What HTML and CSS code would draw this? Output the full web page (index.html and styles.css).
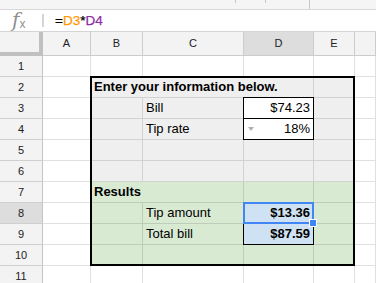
FILE: index.html
```html
<!DOCTYPE html>
<html lang="en-US">
<head>
    <meta charset="UTF-8">
    <title>Tip calculator</title>
<link rel="stylesheet" href="styles.css">
</head>

<body>
<div class=toolbar>
  <span class=tick></span><span class="tick t2"></span><span class="tick t3"></span>
</div>
<div class=fbar>
  <span class=fx><i>f</i><sub>x</sub></span>
  <span class=sep></span>
  <span class=formula>=<span class=ref1>D3</span>*<span class=ref2>D4</span></span>
</div>

<div class=sheet>
 <div class="grid cells">
  <!-- column headers -->
  <div class="hd corner"></div><div class=hd>A</div><div class=hd>B</div><div class=hd>C</div><div class="hd cur">D</div><div class=hd>E</div><div class=hd></div>
  <!-- 1 -->
  <div class=rh>1</div><div></div><div></div><div></div><div></div><div></div><div></div>
  <!-- 2 -->
  <div class=rh>2</div><div></div><div class="gray b span3">Enter your information below.</div><div class=gray></div><div></div>
  <!-- 3 -->
  <div class=rh>3</div><div></div><div class=gray></div><div class=gray>Bill</div><div class=r>$74.23</div><div class=gray></div><div></div>
  <!-- 4 -->
  <div class=rh>4</div><div></div><div class=gray></div><div class=gray>Tip rate</div><div class=drop><span class=dd></span>18%</div><div class=gray></div><div></div>
  <!-- 5 -->
  <div class=rh>5</div><div></div><div class=gray></div><div class=gray></div><div class=gray></div><div class=gray></div><div></div>
  <!-- 6 -->
  <div class=rh>6</div><div></div><div class=gray></div><div class=gray></div><div class=gray></div><div class=gray></div><div></div>
  <!-- 7 -->
  <div class=rh>7</div><div></div><div class="green b span2">Results</div><div class=green></div><div class=green></div><div></div>
  <!-- 8 -->
  <div class="rh cur">8</div><div></div><div class=green></div><div class=green>Tip amount</div><div class="blue b r">$13.36</div><div class=green></div><div></div>
  <!-- 9 -->
  <div class=rh>9</div><div></div><div class=green></div><div class=green>Total bill</div><div class="blue b r">$87.59</div><div class=green></div><div></div>
  <!-- 10 -->
  <div class=rh>10</div><div></div><div class=green></div><div class=green></div><div class=green></div><div class=green></div><div></div>
  <!-- 11 -->
  <div class=rh>11</div><div></div><div></div><div></div><div></div><div></div><div></div>
 </div>

 <!-- borders drawn over the cells -->
 <div class="grid marks">
  <div class="box frame"></div>
  <div class="box d3"></div>
  <div class="box d4"></div>
  <div class="box d9"></div>
  <div class="box sel"><span class=handle></span></div>
 </div>
</div>
</body>
</html>
```

FILE: styles.css
```css
body {
  margin: 0;
  width: 376px;
  height: 283px;
  overflow: hidden;
  background: white;
  font: 13px "Liberation Sans", Arial, sans-serif;
  color: #000;
}

/* remains of the toolbar */
.toolbar {
  display: flex;
  align-items: flex-start;
  height: 9px;
  padding-left: 235px;
  background: #f5f5f5;
  border-bottom: 1px solid #d9d9d9;
}
.tick {
  width: 1px;
  height: 3px;
  background: #c8c8c8;
}
.t2 { margin-left: 29px; }
.t3 { margin-left: 43px; height: 9px; }

/* formula bar */
.fbar {
  display: flex;
  align-items: center;
  height: 21px;
  border-bottom: 1px solid #d4d4d4;
}
.fx {
  width: 30px;
  padding-left: 12px;
  box-sizing: content-box;
  color: #8f8f8f;
  font: italic 20px "DejaVu Serif", serif;
  line-height: 20px;
  letter-spacing: -1px;
}
.fx sub {
  font: 12px "Liberation Sans", sans-serif;
  vertical-align: -1px;
  margin-left: 1px;
}
.sep {
  width: 2px;
  height: 13px;
  background: #d6d6d6;
}
.formula {
  margin-left: 11px;
  font-size: 13.5px;
  -webkit-text-stroke: 0.25px currentColor;
}
.ref1 { color: #ff9900; }
.ref2 { color: #8e2ba6; }

/* grid: cells and the borders over them share one area */
.sheet {
  display: grid;
}
.grid {
  grid-area: 1 / 1;
  display: grid;
  grid-template-columns: 43px 48px 52px 101px 70px 41px 1fr;
  grid-template-rows: 24px repeat(11, 21px);
}
.cells > div {
  box-sizing: border-box;
  border-right: 1px solid rgba(0,0,0,.12);
  border-bottom: 1px solid rgba(0,0,0,.12);
  padding: 0 3px;
  line-height: 20px;
  white-space: nowrap;
}
.cells > .hd {
  background: #f3f3f3;
  border-color: #cccccc;
  text-align: center;
  font-size: 11px;
  line-height: 23px;
  color: #222;
}
.cells > .rh {
  background: #f3f3f3;
  border-color: #d0d0d0;
  border-right-color: #c4c4c4;
  text-align: center;
  font-size: 11px;
  color: #222;
}
.cells > .corner {
  border-right: 4px solid #c0c0c0;
  border-bottom: 4px solid #c0c0c0;
}
.cells > .cur { background: #dddddd; }

.gray  { background: #efefef; }
.green { background: #d9ead3; }
.blue  { background: #cfe2f3; }
.b { font-weight: bold; }
.r { text-align: right; }
.span2 { grid-column: span 2; }
.span3 { grid-column: span 3; }

.drop {
  display: flex;
  align-items: center;
  justify-content: space-between;
}
.dd {
  width: 0;
  height: 0;
  margin-left: 1px;
  border-left: 3px solid transparent;
  border-right: 3px solid transparent;
  border-top: 4px solid #b0b0b0;
}

/* borders */
.box {
  box-sizing: border-box;
  margin: -1px 0 0 -1px;
  border: 1px solid #000;
}
.frame {
  grid-row: 3 / 12;
  grid-column: 3 / 7;
  border-width: 2px;
}
.d3 { grid-row: 4; grid-column: 5; }
.d4 { grid-row: 5; grid-column: 5; }
.d9 { grid-row: 10; grid-column: 5; }
.marks > .sel {
  grid-row: 9;
  grid-column: 5;
  position: relative;
  border: 2px solid #4285f4;
}
.handle {
  position: absolute;
  right: -5px;
  bottom: -5px;
  width: 6px;
  height: 6px;
  background: #4285f4;
  border: 1px solid white;
}
```
